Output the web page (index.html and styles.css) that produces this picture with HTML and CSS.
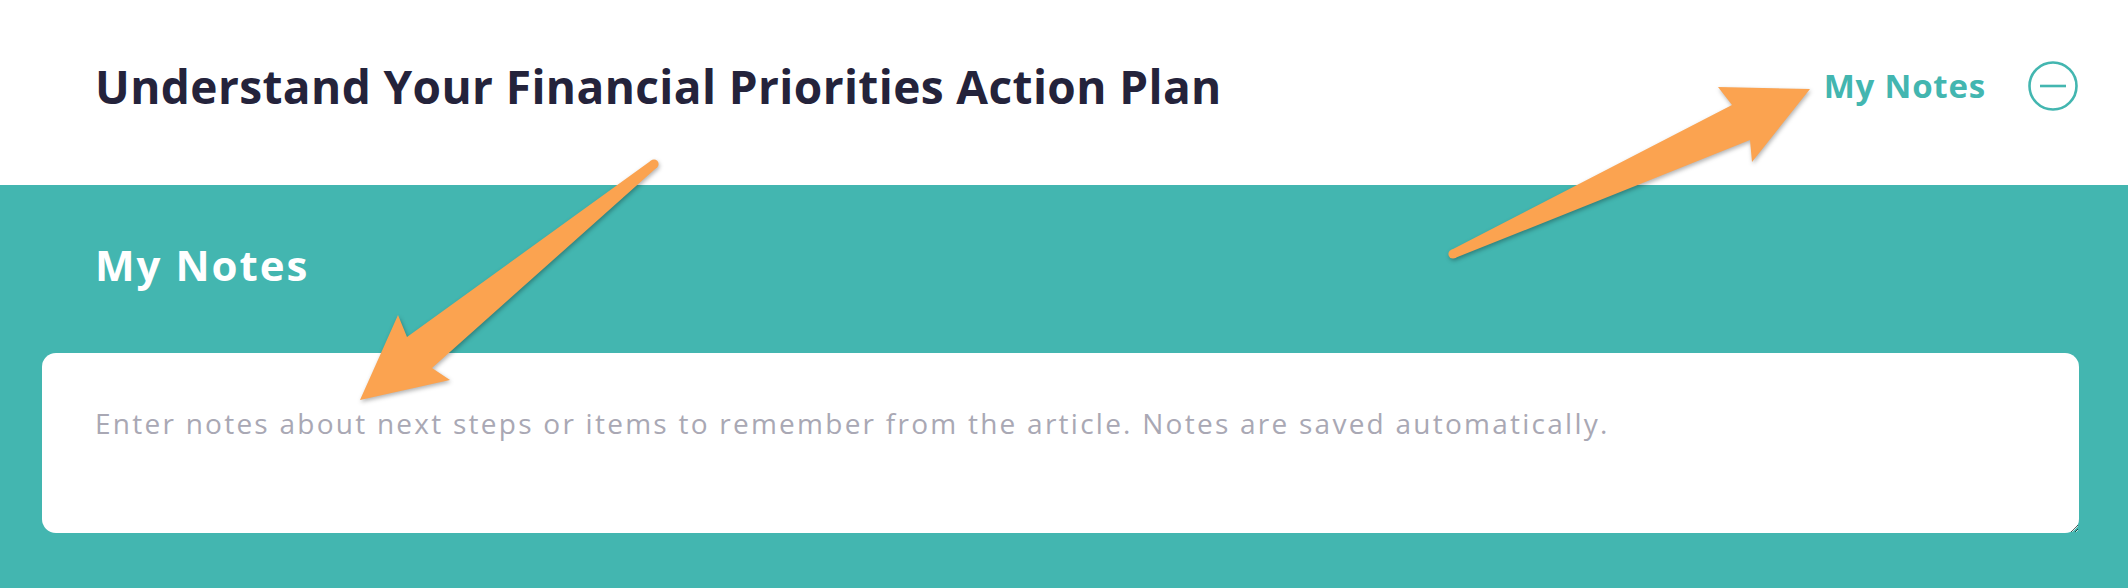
FILE: index.html
```html
<!DOCTYPE html>
<html lang="en">

<head>
    <meta charset="UTF-8">
    <meta name="viewport" content="width=device-width, initial-scale=1.0">
    <title>Action Plan Notes</title>
    <link rel="stylesheet" href="styles.css">
</head>

<body>

    <header class="plan-header">
        <h1 class="plan-title">Understand Your Financial Priorities Action Plan</h1>
        <div class="notes-toggle">
            <span class="notes-toggle-label">My Notes</span>
            <svg class="notes-toggle-icon" width="50" height="50" viewBox="0 0 50 50">
                <circle cx="25" cy="25" r="23.5" fill="none" stroke="#43b6b0" stroke-width="2.6" />
                <line x1="12" y1="25" x2="38" y2="25" stroke="#43b6b0" stroke-width="2.6" />
            </svg>
        </div>
    </header>

    <section class="notes-panel">
        <h2 class="notes-title">My Notes</h2>
        <textarea class="notes-input" placeholder="Enter notes about next steps or items to remember from the article. Notes are saved automatically."></textarea>
    </section>

    <!-- annotation arrows drawn over the page -->
    <svg class="annotations" width="2128" height="588" viewBox="0 0 2128 588">
        <g class="arrow">
            <path d="M 651.2 160.5 L 407 337 L 398 315 L 360 400 L 450 380 L 432 368 L 656.8 167.5 Z" />
            <circle cx="654" cy="164" r="4.6" />
        </g>
        <g class="arrow">
            <path d="M 1451.1 249.9 L 1732 105 L 1718 87 L 1810 89 L 1752 162 L 1750 140 L 1454.9 258.1 Z" />
            <circle cx="1453" cy="254" r="4.6" />
        </g>
    </svg>

</body>

</html>
```

FILE: styles.css
```css
body {
    font-family: "Open Sans", sans-serif;
    margin: 0;
    padding: 0;
    background-color: #43b6b0;
    overflow: hidden;
}

.plan-header {
    display: flex;
    align-items: center;
    justify-content: space-between;
    box-sizing: border-box;
    height: 185px;
    padding: 0 50px 14px 95px;
    background-color: white;
}

.plan-title {
    margin: 0;
    font-size: 46px;
    font-weight: 700;
    letter-spacing: 0.4px;
    color: #24233b;
}

.notes-toggle {
    display: flex;
    align-items: center;
    gap: 42px;
}

.notes-toggle-label {
    font-size: 33px;
    font-weight: 700;
    letter-spacing: 0.8px;
    color: #43b6b0;
}

.notes-toggle-icon {
    display: block;
}

.notes-panel {
    padding: 51px 49px 60px 42px;
}

.notes-title {
    margin: 0 0 60px 53px;
    font-size: 42px;
    font-weight: 700;
    letter-spacing: 2px;
    color: white;
}

.notes-input {
    display: block;
    box-sizing: border-box;
    width: 100%;
    height: 180px;
    padding: 51px 53px;
    border: none;
    border-radius: 14px;
    background-color: white;
    font-family: "Open Sans", sans-serif;
    font-size: 28px;
    letter-spacing: 2.25px;
    color: #333;
    outline: none;
}

.notes-input::placeholder {
    color: #a9a8b4;
}

.annotations {
    position: absolute;
    top: 0;
    left: 0;
    pointer-events: none;
}

.arrow {
    fill: #fba350;
    filter: drop-shadow(1px 2px 2px rgba(0, 0, 0, 0.3));
}
```
